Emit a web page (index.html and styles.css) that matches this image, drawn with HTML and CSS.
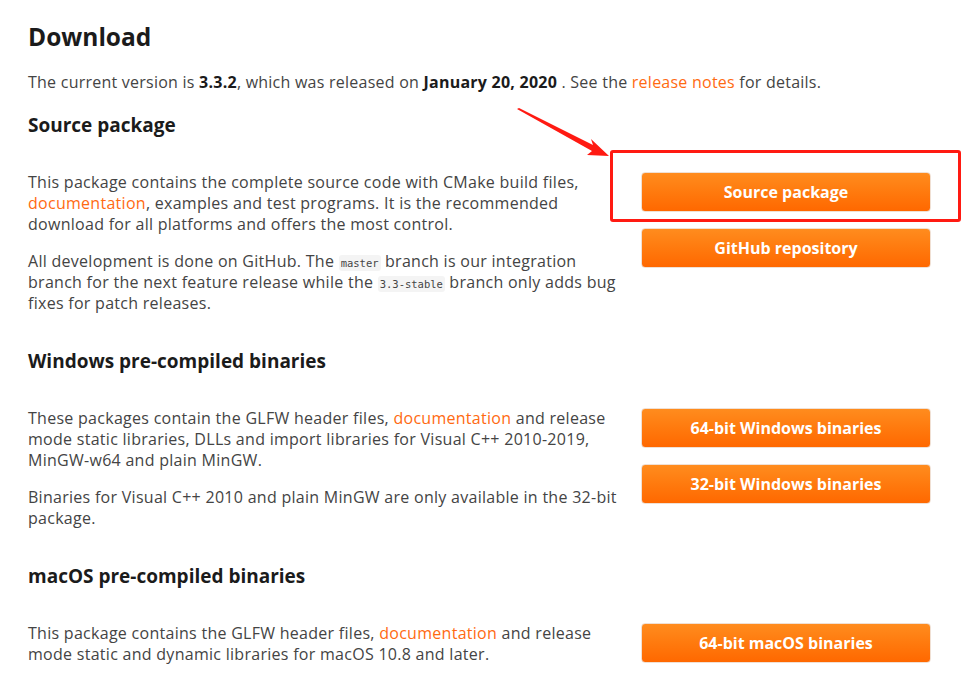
FILE: index.html
```html
<!DOCTYPE html>
<html lang="en">
<head>
<meta charset="utf-8">
<title>Download | GLFW</title>
<link rel="stylesheet" href="styles.css">
</head>
<body>
<main class="page">
  <h1 class="title">Download</h1>
  <p class="intro">The current version is <strong>3.3.2</strong>, which was released on <strong>January 20, 2020</strong> . See the <a href="#">release notes</a> for details.</p>

  <section class="section">
    <h2 class="section-title">Source package</h2>
    <div class="row">
      <div class="text">
        <p>This package contains the complete source code with CMake build files, <a href="#">documentation</a>, examples and test programs. It is the recommended download for all platforms and offers the most control.</p>
        <p>All development is done on GitHub. The <code>master</code> branch is our integration branch for the next feature release while the <code>3.3-stable</code> branch only adds bug fixes for patch releases.</p>
      </div>
      <div class="buttons">
        <a class="btn" href="#">Source package</a>
        <a class="btn" href="#">GitHub repository</a>
      </div>
    </div>
  </section>

  <section class="section">
    <h2 class="section-title">Windows pre-compiled binaries</h2>
    <div class="row">
      <div class="text">
        <p>These packages contain the GLFW header files, <a href="#">documentation</a> and release mode static libraries, DLLs and import libraries for Visual C++ 2010-2019, MinGW-w64 and plain MinGW.</p>
        <p>Binaries for Visual C++ 2010 and plain MinGW are only available in the 32-bit package.</p>
      </div>
      <div class="buttons">
        <a class="btn" href="#">64-bit Windows binaries</a>
        <a class="btn" href="#">32-bit Windows binaries</a>
      </div>
    </div>
  </section>

  <section class="section">
    <h2 class="section-title">macOS pre-compiled binaries</h2>
    <div class="row">
      <div class="text">
        <p>This package contains the GLFW header files, <a href="#">documentation</a> and release mode static and dynamic libraries for macOS 10.8 and later.</p>
      </div>
      <div class="buttons">
        <a class="btn" href="#">64-bit macOS binaries</a>
      </div>
    </div>
  </section>
</main>

<div class="highlight-box"></div>
<svg class="arrow" width="100" height="60" viewBox="0 0 100 60">
  <polygon points="0,1 2,0 76,37 74,31 92,48 70,47 75,43" fill="#ff1a12"/>
</svg>
</body>
</html>
```

FILE: styles.css
```css
html, body {
  margin: 0;
  padding: 0;
  background: #ffffff;
}

body {
  font-family: "Open Sans", "Noto Sans", "Liberation Sans", sans-serif;
  font-size: 16px;
  color: #444444;
}

.page {
  padding: 21px 28px 0 28px;
}

.title {
  margin: 0;
  font-size: 24.5px;
  line-height: 32px;
  font-weight: 700;
  color: #1b1b1b;
}

.intro {
  margin: 19px 0 19px 0;
  line-height: 21px;
  letter-spacing: 0.24px;
}

strong {
  color: #1b1b1b;
  font-weight: 700;
}

a {
  color: #ff6a12;
  text-decoration: none;
}

.section {
  margin-bottom: 34px;
}

.section-title {
  margin: 0 0 34px 0;
  font-size: 19px;
  line-height: 26px;
  font-weight: 700;
  color: #1b1b1b;
}

.row {
  display: grid;
  grid-template-columns: 596px 290px;
  column-gap: 17px;
  align-items: start;
}

.text p {
  margin: 0 0 16px 0;
  line-height: 21px;
  letter-spacing: 0.28px;
}

.text p:last-child {
  margin-bottom: 0;
}

code {
  font-family: "DejaVu Sans Mono", "Liberation Mono", monospace;
  font-size: 10.5px;
  line-height: 1;
  letter-spacing: 0;
  color: #444;
  background: #f4f4f4;
  border-radius: 3px;
  padding: 2px 2px;
}

.buttons {
  display: flex;
  flex-direction: column;
  gap: 16px;
}

.btn {
  display: flex;
  align-items: center;
  justify-content: center;
  height: 40px;
  box-sizing: border-box;
  border: 1px solid #f0e0d4;
  border-radius: 4px;
  background: linear-gradient(to bottom, #ff8c1e 0%, #ff7a0e 50%, #ff6800 100%);
  color: #ffffff;
  font-weight: 700;
  font-size: 16px;
}

.highlight-box {
  position: absolute;
  left: 610px;
  top: 150px;
  width: 351px;
  height: 72px;
  box-sizing: border-box;
  border: 3px solid #ff1a12;
  border-radius: 3px;
}

.arrow {
  position: absolute;
  left: 517px;
  top: 108px;
}
```
